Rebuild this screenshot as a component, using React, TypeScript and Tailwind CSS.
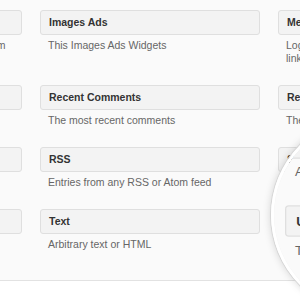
type Widget = { title: string; desc: string; narrow?: boolean };

const rows: Widget[][] = [
  [
    { title: "Custom Menu", desc: "Use this widget to add one of your custom menus as a widget." },
    { title: "Images Ads", desc: "This Images Ads Widgets" },
    { title: "Meta", desc: "Log in/out, admin, feed and WordPress links", narrow: true },
  ],
  [
    { title: "Pages", desc: "Your site’s WordPress Pages" },
    { title: "Recent Comments", desc: "The most recent comments" },
    { title: "Recent Posts", desc: "The most recent posts on your site" },
  ],
  [
    { title: "Links", desc: "Your blogroll" },
    { title: "RSS", desc: "Entries from any RSS or Atom feed" },
    { title: "Search", desc: "A search form for your site" },
  ],
  [
    { title: "Calendar", desc: "A calendar of your posts" },
    { title: "Text", desc: "Arbitrary text or HTML" },
    { title: "User Login", desc: "The login form" },
  ],
];

function WidgetItem({ widget }: { widget: Widget }) {
  return (
    <div className="mb-[20px]">
      <div className="flex h-[25px] items-center rounded-[3px] border border-[#dfdfdf] bg-[#f3f3f3] px-[8px] text-[10.5px] font-bold text-[#333]">
        {widget.title}
      </div>
      <p
        className={
          widget.narrow
            ? "mt-[4px] max-w-[200px] px-[8px] text-[10.5px] leading-[13px] text-[#666]"
            : "mt-[4px] px-[8px] text-[10.5px] leading-[13px] text-[#666]"
        }
      >
        {widget.desc}
      </p>
    </div>
  );
}

function Page() {
  return (
    <div className="h-[300px] w-[300px] bg-white font-['Liberation_Sans',Arial,sans-serif]">
      <div className="h-[281px] border-b border-[#e2e2e2] bg-[#fafafa] pt-[10px]">
        <div className="ml-[-198px] grid w-[698px] grid-cols-[220px_220px_220px] gap-x-[18px]">
          {rows.flat().map((w) => (
            <WidgetItem key={w.title} widget={w} />
          ))}
        </div>
      </div>
    </div>
  );
}

export default function App() {
  return (
    <div className="relative h-[300px] w-[300px] overflow-hidden bg-white">
      <Page />
      {/* magnifier lens */}
      <div className="absolute left-[271px] top-[116px] h-[198px] w-[198px] overflow-hidden rounded-full border-[3px] border-white shadow-[0_0_0_1px_#d6d6d6,0_0_8px_rgba(0,0,0,0.18),inset_0_0_4px_rgba(0,0,0,0.12)]">
        <div className="absolute left-[-274px] top-[-119px] origin-[251px_223px] scale-[1.26]">
          <Page />
        </div>
      </div>
    </div>
  );
}
